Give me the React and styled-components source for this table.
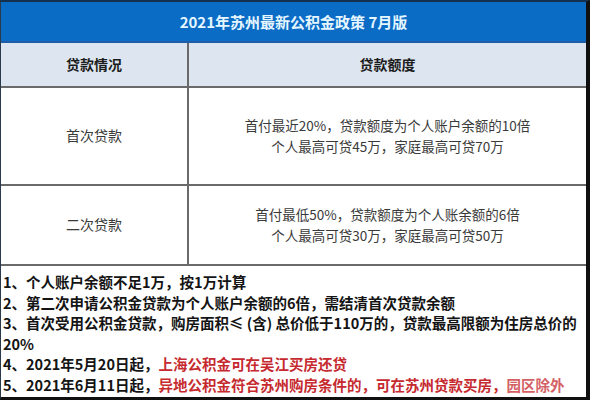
import React from "react";
import styled, { createGlobalStyle } from "styled-components";

const GlobalStyle = createGlobalStyle`
  html, body {
    margin: 0;
    padding: 0;
    background: #ffffff;
  }
  body {
    font-family: "Noto Sans CJK SC", "Noto Sans", sans-serif;
  }
`;

const Frame = styled.div`
  box-sizing: border-box;
  width: 590px;
  height: 400px;
  display: flex;
  flex-direction: column;
  background: #ffffff;
  border-top: 2px solid #14304f;
  border-right: 4px solid #101010;
  border-bottom: 3px solid #101010;
  border-left: 1px solid #2a3a4a;
  overflow: hidden;
`;

const TitleBar = styled.div`
  box-sizing: border-box;
  height: 41px;
  display: flex;
  align-items: center;
  justify-content: center;
  background: #0b6cc6;
  border-bottom: 2px solid #1f5ea6;
  color: #e4f6ff;
  font-size: 15px;
  font-weight: 700;
`;

const Table = styled.div`
  display: grid;
  grid-template-columns: 188px 1fr;
`;

const Cell = styled.div`
  box-sizing: border-box;
  height: ${(props) => props.$h}px;
  display: flex;
  flex-direction: column;
  align-items: center;
  justify-content: center;
  border-bottom: 2px solid #6a6a6a;
  border-right: ${(props) => (props.$first ? "2px solid #6a6a6a" : "none")};
  background: ${(props) => (props.$head ? "#dde6f0" : "#ffffff")};
  color: ${(props) => (props.$head ? "#1c1c1c" : "#3a3a3a")};
  font-size: ${(props) => (props.$small ? 13.5 : 14)}px;
  font-weight: ${(props) => (props.$head ? 700 : 400)};
  line-height: 21.5px;
  text-align: center;
`;

const Notes = styled.div`
  flex: 1;
  padding: 6px 0 0 2px;
  color: #141414;
  font-size: 14.5px;
  font-weight: 700;
  line-height: 20.5px;
  white-space: nowrap;
`;

const NoteLine = styled.div``;

const Red = styled.span`
  color: #c62a2f;
  opacity: ${(props) => (props.$faded ? 0.75 : 1)};
`;

const rows = [
  {
    type: "首次贷款",
    h: 98,
    lines: ["首付最近20%，贷款额度为个人账户余额的10倍", "个人最高可贷45万，家庭最高可贷70万"],
  },
  {
    type: "二次贷款",
    h: 80,
    lines: ["首付最低50%，贷款额度为个人账余额的6倍", "个人最高可贷30万，家庭最高可贷50万"],
  },
];

const App = () => {
  return (
    <>
      <GlobalStyle />
      <Frame>
        <TitleBar>2021年苏州最新公积金政策 7月版</TitleBar>
        <Table>
          <Cell $h={45} $head $first>
            贷款情况
          </Cell>
          <Cell $h={45} $head>
            贷款额度
          </Cell>
          {rows.map((row) => (
            <React.Fragment key={row.type}>
              <Cell $h={row.h} $first>
                {row.type}
              </Cell>
              <Cell $h={row.h} $small>
                {row.lines.map((line) => (
                  <div key={line}>{line}</div>
                ))}
              </Cell>
            </React.Fragment>
          ))}
        </Table>
        <Notes>
          <NoteLine>1、个人账户余额不足1万，按1万计算</NoteLine>
          <NoteLine>2、第二次申请公积金贷款为个人账户余额的6倍，需结清首次贷款余额</NoteLine>
          <NoteLine>
            3、首次受用公积金贷款，购房面积≤ (含) 总价低于110万的，贷款最高限额为住房总价的
            <br />
            20%
          </NoteLine>
          <NoteLine>
            4、2021年5月20日起，<Red>上海公积金可在吴江买房还贷</Red>
          </NoteLine>
          <NoteLine>
            5、2021年6月11日起，<Red>异地公积金符合苏州购房条件的，可在苏州贷款买房，</Red>
            <Red $faded>园区除外</Red>
          </NoteLine>
        </Notes>
      </Frame>
    </>
  );
};

export default App;
